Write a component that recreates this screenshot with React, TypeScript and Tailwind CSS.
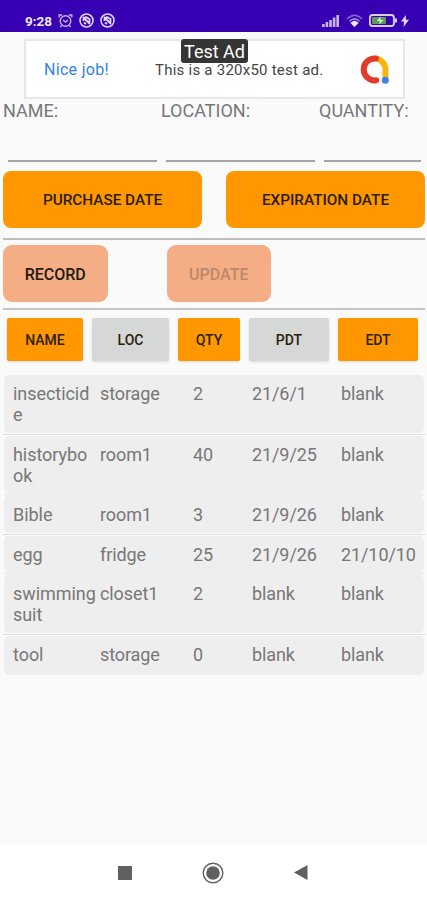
import React, { useState } from 'react';
import clsx from 'clsx';

interface Item {
  id: number;
  name: string;
  location: string;
  quantity: number;
  purchased: string;
  expires: string;
}

const ITEMS: Item[] = [
  { id: 1, name: 'insecticide', location: 'storage', quantity: 2, purchased: '21/6/1', expires: 'blank' },
  { id: 2, name: 'historybook', location: 'room1', quantity: 40, purchased: '21/9/25', expires: 'blank' },
  { id: 3, name: 'Bible', location: 'room1', quantity: 3, purchased: '21/9/26', expires: 'blank' },
  { id: 4, name: 'egg', location: 'fridge', quantity: 25, purchased: '21/9/26', expires: '21/10/10' },
  { id: 5, name: 'swimming suit', location: 'closet1', quantity: 2, purchased: 'blank', expires: 'blank' },
  { id: 6, name: 'tool', location: 'storage', quantity: 0, purchased: 'blank', expires: 'blank' },
];

const HEADERS = [
  { label: 'NAME', className: 'w-[76px] bg-[#ff9800]' },
  { label: 'LOC', className: 'w-[77px] ml-[9px] bg-[#d6d7d7]' },
  { label: 'QTY', className: 'w-[62px] ml-[9px] bg-[#ff9800]' },
  { label: 'PDT', className: 'w-[80px] ml-[9px] bg-[#d6d7d7]' },
  { label: 'EDT', className: 'w-[80px] ml-[9px] bg-[#ff9800]' },
];

const MutedIcon = () => (
  <svg className="w-[15px] h-[15px]" viewBox="0 0 15 15" fill="none" stroke="#e4d9f7" strokeWidth="1.5">
    <circle cx="7.5" cy="7.5" r="6.5" />
    <path d="M4.5 8V6L7 4l3.5 2v3.5M5 9.5 7 11M4 4l7 7" strokeWidth="1.8" />
  </svg>
);

const StatusBar = () => (
  <div className="h-8 bg-[#3700b3] flex items-start pt-[13px] pl-[25px] pr-[18px]">
    <span className="w-[27px] text-[13.5px] leading-[17px] font-bold text-[#eee8fa] whitespace-nowrap">9:28</span>
    <div className="flex items-center gap-[6px] ml-[6px]">
      <svg className="w-[15px] h-[15px]" viewBox="0 0 15 15" fill="none" stroke="#c4b4eb" strokeWidth="1.4">
        <circle cx="7.5" cy="8" r="5.3" />
        <path d="M1.2 4.5V2h3M13.8 4.5V2h-3M5 7l2.5 2L10 7M3.5 12.5 2.5 14M11.5 12.5l1 1.5" />
      </svg>
      <MutedIcon />
      <MutedIcon />
    </div>
    <div className="flex items-center ml-auto mt-[1px]">
      <svg className="w-[17px] h-[13px]" viewBox="0 0 17 13" fill="#c8b8ee">
        <rect x="0" y="10" width="2.6" height="3" />
        <rect x="3.6" y="8" width="2.6" height="5" />
        <rect x="7.2" y="6" width="2.6" height="7" />
        <rect x="10.8" y="3.5" width="2.6" height="9.5" />
        <rect x="14.4" y="1" width="2.6" height="12" />
      </svg>
      <svg className="w-[17px] h-[13px] ml-[7px]" viewBox="0 0 17 13" fill="none" strokeWidth="1.5">
        <path d="M1 5Q8.5-2.5 16 5" stroke="#8565d2" />
        <path d="M3.5 7.3q5-4.8 10 0" stroke="#a48be0" />
        <path d="M5.5 9Q8.5 6 11.5 9L8.5 12Z" stroke="#eee8fa" fill="#eee8fa" />
      </svg>
      <svg className="w-[28px] h-[13px] ml-[6px]" viewBox="0 0 28 13">
        <rect x=".9" y="1" width="24" height="11" rx="2.5" fill="none" stroke="#d9cdf4" strokeWidth="1.9" />
        <rect x="3" y="3" width="14" height="7" rx="1" fill="#5b9b58" />
        <path d="M11.5 2.5 8 7h3l-1 3.5L14.5 6h-3Z" fill="#e4f3dc" />
        <rect x="26" y="4.5" width="2" height="4" fill="#d9cdf4" />
      </svg>
      <svg className="w-[8px] h-[12px] ml-[4px]" viewBox="0 0 8 12" fill="#e2d8f7">
        <path d="M5 0 0 6.5h3L2.5 12 8 4.8H4.8Z" />
      </svg>
    </div>
  </div>
);

const AdBanner = () => (
  <div className="relative w-[381px] h-[60px] mt-[7px] ml-[24px] border-2 border-[#e6e8e8] bg-white flex items-center">
    <span className="w-[110px] pl-[18px] pt-[2px] text-[16px] text-[#347fe6] whitespace-nowrap tracking-[0.3px]">
      Nice job!
    </span>
    <span className="pl-[19px] pt-[2px] text-[15px] text-[#444] whitespace-nowrap tracking-[0.24px]">
      This is a 320x50 test ad.
    </span>
    <svg className="w-[29px] h-[29px] ml-auto mr-[14px]" viewBox="0 0 29 29" fill="none" strokeWidth="6">
      <path d="M14.5 3.6A11 11 0 0 1 25.5 14.5V25" stroke="#fbb409" />
      <path d="M16 3.5A11 11 0 1 0 16.3 25.3" stroke="#e23b2e" strokeLinecap="round" />
      <circle cx="25.3" cy="25.2" r="3.5" fill="#3f82e8" />
    </svg>
    <span className="absolute left-[155px] -top-[2px] w-[67px] h-[24px] rounded-[3px] bg-[#353535] text-white text-[18px] leading-[25px] text-center whitespace-nowrap">
      Test Ad
    </span>
  </div>
);

interface FieldProps {
  label: string;
  className: string;
}

const Field: React.FC<FieldProps> = ({ label, className }) => (
  <label className={clsx('block shrink-0', className)}>
    <span className="block h-[24px] text-[18px] leading-[24px] text-[#777] whitespace-nowrap">{label}</span>
    <input
      type="text"
      className="block w-[calc(100%-9px)] ml-[5px] h-[39px] border-b-2 border-[#a4a4a4] bg-transparent text-[18px] focus:outline-none"
    />
  </label>
);

const App: React.FC = () => {
  const [items] = useState<Item[]>(ITEMS);

  return (
    <div className="w-[427px] h-[900px] overflow-hidden flex flex-col bg-[#fafafa] font-[Roboto,sans-serif]">
      <StatusBar />
      <AdBanner />

      <div className="flex pl-[3px]">
        <Field label="NAME:" className="w-[158px]" />
        <Field label="LOCATION:" className="w-[158px]" />
        <Field label="QUANTITY:" className="w-[106px]" />
      </div>

      <div className="flex justify-between mt-[9px] pl-[3px] pr-[2px] text-[15.3px] font-medium text-[#2b1c05]">
        <button className="w-[199px] h-[57px] pt-[2px] rounded-[8px] bg-[#ff9800]">PURCHASE DATE</button>
        <button className="w-[199px] h-[57px] pt-[2px] rounded-[8px] bg-[#ff9800]">EXPIRATION DATE</button>
      </div>

      <div className="h-[2px] mt-[9.5px] ml-[3px] mr-[2px] bg-[#bdbdbd]" />

      <div className="flex gap-[59px] mt-[5.5px] pl-[3px] text-[16px] font-medium">
        <button className="w-[104.5px] h-[57px] pt-[2px] rounded-[9px] bg-[#f4ad85] text-[#251a14]">RECORD</button>
        <button disabled className="w-[104.5px] h-[57px] pt-[2px] rounded-[9px] bg-[#f4ad85] text-[#bd8869]">UPDATE</button>
      </div>

      <div className="h-[2px] mt-[6px] ml-[3px] mr-[2px] bg-[#c4c4c4]" />

      {/* Column sort buttons */}
      <div className="flex mt-[8px] pl-[7px] text-[14px] font-medium text-[#2b2008]">
        {HEADERS.map((header) => (
          <button key={header.label} className={clsx('h-[43px] pt-[2px] rounded-[2px] shadow-sm', header.className)}>
            {header.label}
          </button>
        ))}
      </div>

      <ul className="mt-[14px] ml-[3px] mr-[2px]">
        {items.map((item, index) => (
          <li key={item.id}>
            {/* every second gap falls on a divider, the others blend into the rows */}
            {index > 0 && (
              <div className={clsx('h-[3px] mx-px flex flex-col justify-center', index % 2 === 0 && 'bg-[#efefef]')}>
                {index % 2 === 1 && <div className="h-px -mx-px bg-[#dedede]" />}
              </div>
            )}
            <div
              className={clsx(
                'flex mx-px pl-[9px] pt-[8px] rounded-[5px] bg-[#eee] text-[18px] leading-[21px] text-[#777]',
                index === items.length - 1 ? 'pb-[10px]' : 'pb-[7.5px]'
              )}
            >
              <span className="w-[84px] mr-[3px] [overflow-wrap:anywhere] tracking-[-0.05px]">{item.name}</span>
              <span className="w-[93px] tracking-[-0.1px]">{item.location}</span>
              <span className="w-[59px]">{item.quantity}</span>
              <span className="w-[89px] tracking-[-0.1px]">{item.purchased}</span>
              <span className="whitespace-nowrap tracking-[-0.1px]">{item.expires}</span>
            </div>
          </li>
        ))}
      </ul>

      {/* Android navigation */}
      <div className="h-[56px] mt-auto bg-white flex items-center pl-[118px] pt-px">
        <div className="w-[14px] h-[14px] bg-[#606060]" />
        <svg className="w-[22px] h-[22px] ml-[70px]" viewBox="0 0 22 22">
          <circle cx="11" cy="11" r="9.8" fill="none" stroke="#606060" strokeWidth="1.4" />
          <circle cx="11" cy="11" r="6.8" fill="#606060" />
        </svg>
        <svg className="w-[14px] h-[15px] ml-[70px]" viewBox="0 0 14 15" fill="#606060">
          <path d="M0 7.5 13.5 0v15Z" />
        </svg>
      </div>
    </div>
  );
};

export default App;
